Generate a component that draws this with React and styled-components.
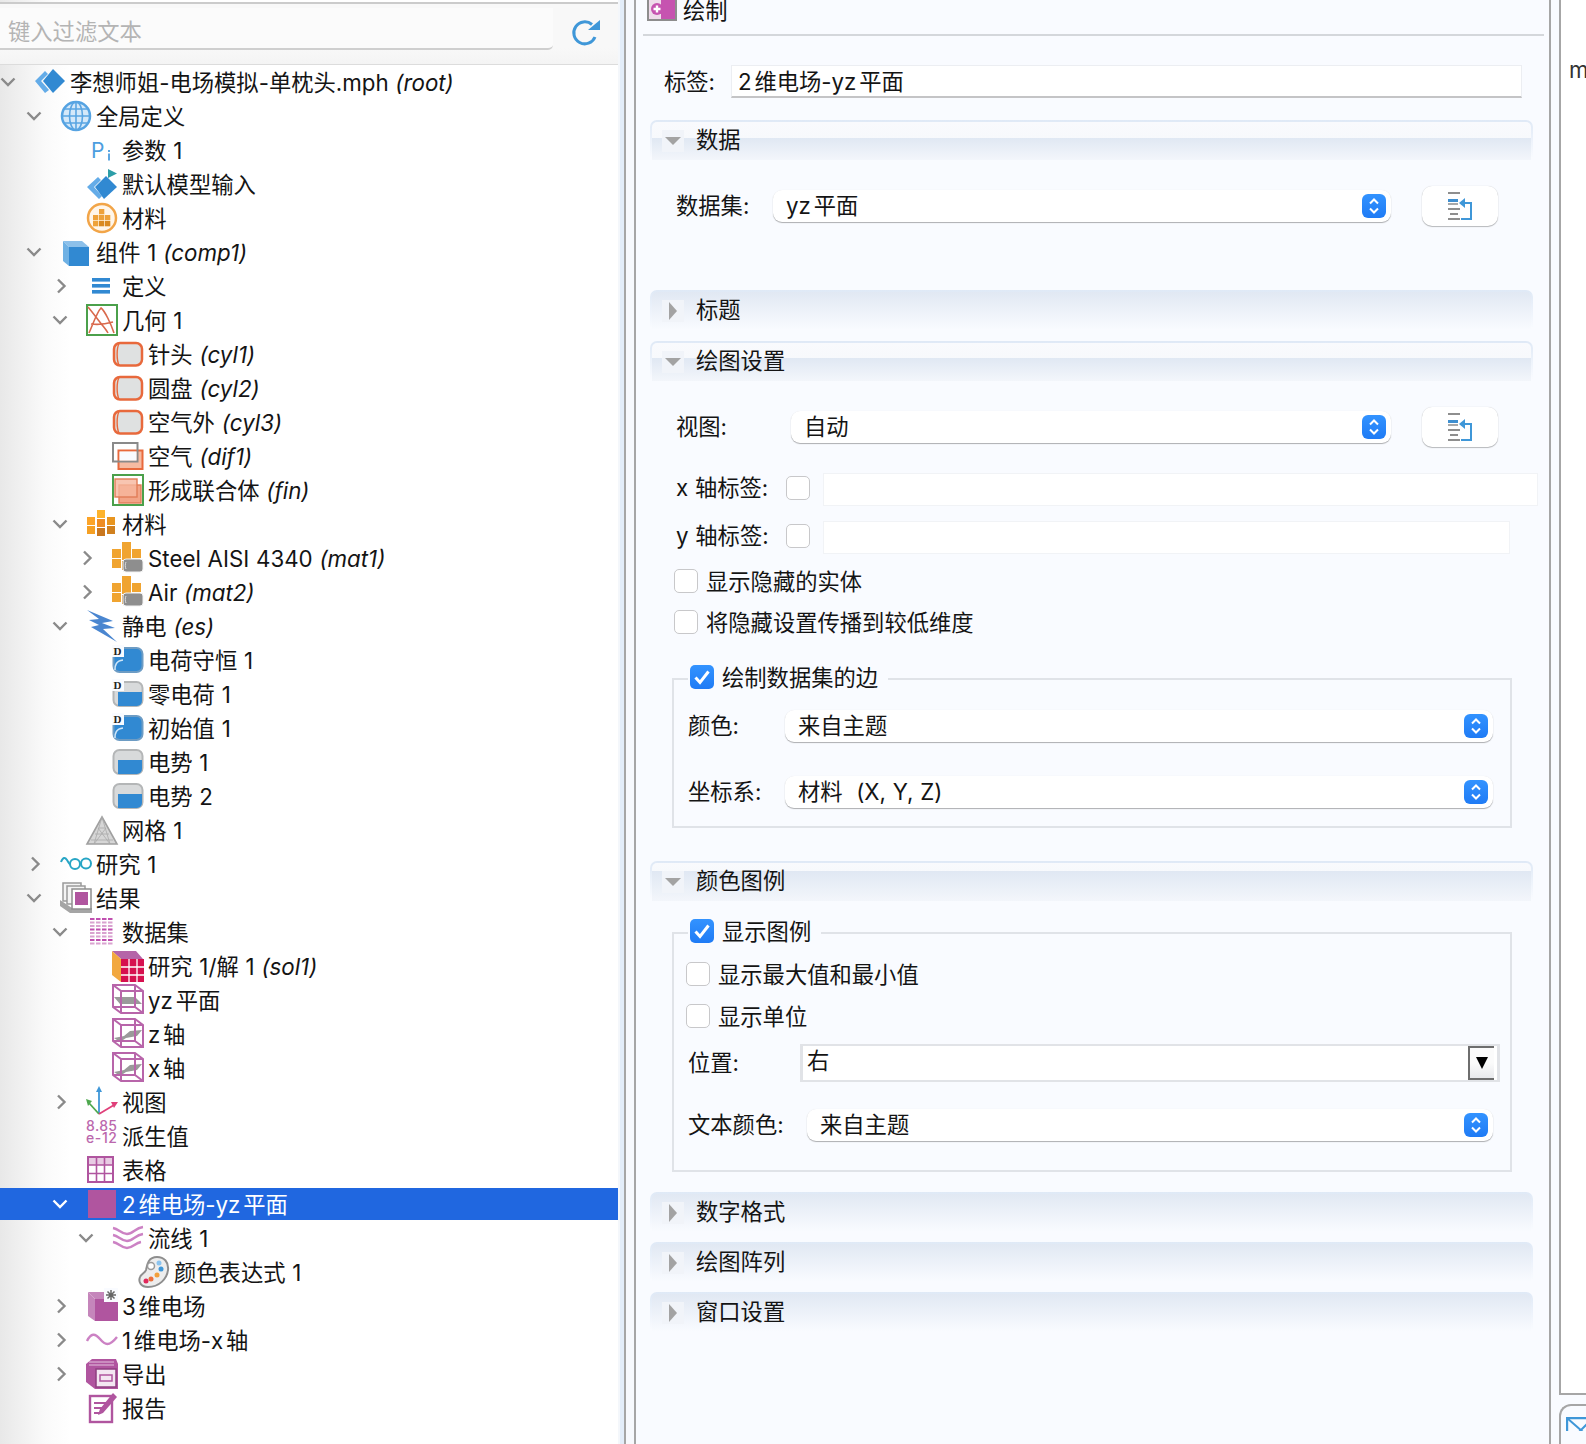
import React from 'react'
import styled, { createGlobalStyle } from 'styled-components'

const PURPLE = '#b0559f'
const WIRE = '#b865aa'
const BLUE = '#3189d2'
const ORANGE = '#e8693c'

const GlobalStyle = createGlobalStyle`
  html, body {
    margin: 0;
    padding: 0;
    background: #f9fbff;
  }
  body {
    font-family: Inter, "Noto Sans CJK SC", sans-serif;
    font-size: 22.3px;
    line-height: 30px;
    word-spacing: 0.5px;
    color: #141414;
    text-autospace: normal;
  }
  * { box-sizing: border-box; }
`

/* ---------- tree icons ---------- */

const Ico = ({ children, size = 32 }) => (
  <svg width={size} height={size} viewBox="0 0 32 32" style={{ overflow: 'visible', display: 'block' }}>{children}</svg>
)

const RootIcon = () => (
  <Ico>
    <polygon points="1,15 11,5 14,8 7,15 15,24 11,27" fill="#64ace8" />
    <polygon points="19,3 31,15 19,27 9,15" fill={BLUE} />
  </Ico>
)

const GlobeIcon = () => (
  <Ico>
    <circle cx="16" cy="16" r="14" fill="#d4e8f9" stroke="#55a3e2" strokeWidth="2.5" />
    <ellipse cx="16" cy="16" rx="6.5" ry="14" fill="none" stroke="#5aa5e2" strokeWidth="1.6" />
    <path d="M16 2v28M2 16h28M4 9h24M4 23h24" stroke="#5aa5e2" strokeWidth="1.6" fill="none" />
  </Ico>
)

const ParamIcon = () => (
  <Ico>
    <text x="5" y="24" fontSize="21" fontFamily="Inter" fill="#4c9edf">P</text>
    <path d="M23 16v2M23 19.500v7" stroke="#4c9edf" strokeWidth="1.800" />
  </Ico>
)

const DefaultIcon = () => (
  <Ico>
    <polygon points="1,19 12,9 15,12 8,19 16,28 13,31" fill="#64ace8" />
    <polygon points="20,8 31,19 18,31 9,19" fill={BLUE} />
    <polygon points="22,1 31,5.500 22,10" fill="#2d9ea8" />
  </Ico>
)

const Squares = ({ small }) => {
  const s = small ? 9 : 8
  const cells = small
    ? [[10, 0, '#f0a430'], [0, 7, '#f0a430'], [10, 9, '#f0a430'], [20, 7, '#f0a430'], [0, 17, '#f0a430'], [10, 19, '#d89030']]
    : [[11, 2, '#fdb32c'], [1, 9, '#fca428'], [11, 11, '#ee8c22'], [21, 9, '#e8951f'], [1, 18, '#f5a024'], [11, 20, '#c9771f'], [21, 18, '#d0801f']]
  return cells.map(([x, y, c], i) => <rect key={i} x={x} y={y} width={s} height={s} fill={c} />)
}

const MaterialRingIcon = () => (
  <Ico>
    <circle cx="16" cy="16" r="14" fill="#fff6ea" stroke="#f2a548" strokeWidth="2.5" />
    {[[13, 7], [7, 13], [13, 13], [19, 13], [7, 19], [13, 19], [19, 19]].map(([x, y], i) => (
      <rect key={i} x={x} y={y} width="5.300" height="5.300" fill={i > 4 ? '#d98a22' : '#eea23a'} />
    ))}
  </Ico>
)

const CubeIcon = () => (
  <Ico>
    <polygon points="3,5 22,5 29,11 9,11" fill="#8cc0ea" />
    <polygon points="3,5 9,11 9,30 3,25" fill="#6fb1e4" />
    <rect x="9" y="11" width="20" height="19" fill={BLUE} />
  </Ico>
)

const LinesIcon = () => (
  <Ico>
    <rect x="6" y="8" width="18" height="3.600" fill={BLUE} />
    <rect x="6" y="14" width="18" height="3.600" fill={BLUE} />
    <rect x="6" y="20" width="18" height="3.600" fill={BLUE} />
  </Ico>
)

const GeometryIcon = () => (
  <Ico>
    <rect x="1" y="1" width="30" height="30" fill="#fff" stroke="#4ba04b" strokeWidth="2" />
    <path d="M3 29C7 20 11 8 15 4c4 3 10 16 13 25M2 3c5 6 11 14 15 19s4 5 5 7M5 20c7 1 15 0 22-2" fill="none" stroke="#d9694c" strokeWidth="1.600" />
  </Ico>
)

const CylinderIcon = () => (
  <Ico>
    <rect x="2" y="5" width="28" height="22.500" rx="6" fill="#dfe1e1" stroke={ORANGE} strokeWidth="2.500" />
    <path d="M7 5.500c-2.500 5-2.500 16.500 0 21.500" fill="none" stroke={ORANGE} strokeWidth="1.400" />
  </Ico>
)

const DifferenceIcon = () => (
  <Ico>
    <rect x="6.500" y="10.500" width="24" height="18.500" fill="#f6bba2" stroke={ORANGE} strokeWidth="2" />
    <rect x="1" y="3" width="24.500" height="18.500" fill="none" stroke="#8a8a8a" strokeWidth="2" />
    <rect x="7.500" y="11.500" width="17" height="9" fill="#f9fbff" />
  </Ico>
)

const UnionIcon = () => (
  <Ico>
    <rect x="1" y="1" width="30" height="30" fill="#fff" stroke="#4ba04b" strokeWidth="2" />
    <rect x="7" y="11" width="22" height="18" fill="#f2a487" stroke="#e27d57" strokeWidth="1.400" />
    <rect x="3" y="5" width="22" height="18" fill="#f6b69d" fillOpacity="0.8" stroke="#e27d57" strokeWidth="1.400" />
  </Ico>
)

const MaterialIcon = () => <Ico><Squares /></Ico>

const MaterialSteelIcon = () => (
  <Ico>
    <Squares small />
    <rect x="11" y="17" width="20" height="13" rx="3" fill="#8e8e8e" stroke="#f2f2f2" />
    <path d="M14 20c-1 2-1 5 0 7" stroke="#ddd" fill="none" />
  </Ico>
)

const BoltIcon = () => (
  <Ico>
    <polygon points="1,0 27,11 16,13 29,18 17,19 31,32 5,17 13,15 3,10 13,9" fill="#4a86d0" />
  </Ico>
)

const DomainIcon = ({ flag, full }) => (
  <Ico>
    <rect x="1.500" y="4" width="29" height="24" rx="6" fill={full ? BLUE : '#d8dadb'} stroke={full ? '#6d9cc4' : '#b4b6b7'} strokeWidth="2" />
    {full ? (
      <path d="M3 26c0-5 1-9 8-10" stroke="#cfe6f8" strokeWidth="1.500" fill="none" />
    ) : (
      <path d="M6 14h24v9a5 5 0 0 1-5 5H6z" fill={BLUE} />
    )}
    {flag && (
      <>
        <rect x="0" y="1" width="12" height="12" fill="#f9fbff" />
        <text x="1.500" y="11" fontSize="11" fontWeight="700" fontFamily="Liberation Serif" fill="#222">D</text>
      </>
    )}
  </Ico>
)

const MeshIcon = () => (
  <Ico>
    <polygon points="16,3 31,30 1,30" fill="#d6d6d6" stroke="#a0a0a0" strokeWidth="1.600" />
    <path d="M9 20h14M5 26h22M12.500 14h7M16 3L8 30M16 3l8 27M8 30l12-16M24 30L12 14" stroke="#aaa" strokeWidth="0.800" fill="none" />
  </Ico>
)

const StudyIcon = () => (
  <Ico>
    <path d="M1 14c2-5 4-5 6-2s2 4 3 4" fill="none" stroke="#27a5c5" strokeWidth="2" />
    <circle cx="15" cy="16" r="5" fill="none" stroke="#27a5c5" strokeWidth="2" />
    <circle cx="26" cy="15.500" r="5" fill="none" stroke="#27a5c5" strokeWidth="2" />
  </Ico>
)

const ResultsIcon = () => (
  <Ico>
    <rect x="3" y="1" width="18" height="18" fill="#f4f4f4" stroke="#9a9a9a" strokeWidth="1.500" />
    <rect x="7" y="4" width="18" height="18" fill="#f4f4f4" stroke="#9a9a9a" strokeWidth="1.500" />
    <polygon points="0,18 12,26 32,26 32,31 10,31 0,24" fill="#a5a5a5" />
    <rect x="12" y="7" width="19" height="20" fill="#fff" stroke="#8e8e8e" strokeWidth="1.500" />
    <rect x="15" y="10" width="13" height="13" fill={PURPLE} />
  </Ico>
)

const DatasetIcon = () => (
  <Ico>
    {[3, 6.500, 10, 13.500, 17, 20.500, 24, 27.500].map((y, row) =>
      [4, 10, 16, 22].map((x) => (
        <rect key={`${x}-${y}`} x={x} y={y - 1} width="4.500" height="2" fill={row % 3 === 0 ? '#c050b0' : '#d9a3d0'} />
      ))
    )}
  </Ico>
)

const SolutionIcon = () => (
  <Ico>
    <polygon points="0,1 24,1 31,9 9,9" fill="#b565a8" />
    <polygon points="0,1 9,9 9,32 0,25" fill="#f2a840" />
    <rect x="9" y="9" width="23" height="23" fill="#d6104f" />
    <path d="M17 9v23M25 9v23M9 17h23M9 25h23" stroke="#fff" strokeWidth="1.300" />
  </Ico>
)

const CutIcon = ({ flat }) => (
  <Ico>
    <polygon points={flat ? '2,13 23,13 30,20 8,20' : '2,20 12,18 18,13 30,12 25,18 14,20 8,24'} fill="#9a9a9a" />
    <path d="M1 1h22l8 6v22H9l-8-6zM1 1l8 6v22M9 7h22M23 1v22H1M23 23l8 6" fill="none" stroke={WIRE} strokeWidth="2" />
  </Ico>
)

const AxesIcon = () => (
  <Ico>
    <path d="M13 28V4" stroke="#3f97d8" strokeWidth="1.800" />
    <polygon points="13,0 16,6 10,6" fill="#3f97d8" />
    <path d="M13 28L3 17" stroke="#4ea84e" strokeWidth="1.800" />
    <polygon points="0,13 6,15 2,20" fill="#4ea84e" />
    <path d="M13 28l15-9" stroke="#e0407a" strokeWidth="1.800" />
    <polygon points="32,16 28,22 25,16" fill="#e0407a" />
  </Ico>
)

const NumericIcon = () => (
  <Ico>
    <text x="0" y="10.500" fontSize="14" fontWeight="500" fontFamily="Inter" fill="#bb67ad" textLength="31">8.85</text>
    <text x="0" y="23" fontSize="14" fontWeight="500" fontFamily="Inter" fill="#bb67ad" textLength="31">e-12</text>
  </Ico>
)

const TableIcon = () => (
  <Ico>
    <rect x="2" y="3" width="25" height="25" fill="#fff" stroke={PURPLE} strokeWidth="2" />
    <rect x="3" y="4" width="23" height="7" fill="#d8a8d0" opacity="0.6" />
    <path d="M10.500 3v25M18.500 3v25M2 11h25M2 19.500h25" stroke={PURPLE} strokeWidth="1.600" />
  </Ico>
)

const SquareIcon = () => (
  <Ico>
    <rect x="2" y="2" width="28" height="28" fill={PURPLE} />
  </Ico>
)

const StreamIcon = () => (
  <Ico>
    <path d="M1 6c6 1 8 6 14 6s8-6 16-7M1 13c6 1 8 6 14 6s8-6 16-7M1 20c6 1 8 6 14 6s8-5 14-6" fill="none" stroke="#cc82c4" strokeWidth="2.400" />
  </Ico>
)

const PaletteIcon = () => (
  <Ico>
    <path d="M19 1c7 0 12 5 11 13-1 9-9 17-20 17C3 31 0 26 2 21c1-3 5-4 6-7 1-5 2-13 11-13z" fill="#ededed" stroke="#8e8e8e" strokeWidth="2" />
    <circle cx="13" cy="10" r="3.500" fill="#fff" stroke="#9a9a9a" strokeWidth="1.500" />
    <circle cx="21" cy="7" r="2.500" fill="#8cc4ef" />
    <circle cx="23" cy="13" r="2.500" fill="#3f97d8" />
    <circle cx="19" cy="19" r="2.500" fill="#f2a03c" />
    <circle cx="13" cy="23" r="2.500" fill="#ec6f3c" />
    <circle cx="8" cy="25" r="2.500" fill="#e0285c" />
  </Ico>
)

const Plot3dIcon = () => (
  <Ico>
    <polygon points="2,2 22,2 30,9 9,9" fill="#c586bb" />
    <polygon points="2,2 9,9 9,31 2,26" fill="#c586bb" />
    <rect x="9" y="9" width="23" height="22" fill={PURPLE} />
    <rect x="18" y="-2" width="14" height="14" fill="#f9fbff" />
    <path d="M25 0v10M20 5h10M21.500 1.500l7 7M28.500 1.500l-7 7" stroke="#666" strokeWidth="1.500" />
  </Ico>
)

const WaveIcon = () => (
  <Ico>
    <path d="M1 17c4-8 8-8 13-2s9 8 17-2" fill="none" stroke="#cc82c4" strokeWidth="2.400" />
  </Ico>
)

const ExportIcon = () => (
  <Ico>
    <polygon points="0,6 6,1 30,1 32,6 32,31 9,31 0,24" fill={PURPLE} />
    <path d="M3 4h25M3 7h25" stroke="#e4c3df" strokeWidth="1" />
    <rect x="10" y="11" width="20" height="18" fill="#f4e6f2" stroke="#8f3f81" strokeWidth="1.500" />
    <rect x="14" y="17" width="12" height="6" fill="none" stroke={PURPLE} strokeWidth="1.500" />
  </Ico>
)

const ReportIcon = () => (
  <Ico>
    <rect x="4" y="4" width="22" height="26" fill="#fff" stroke={PURPLE} strokeWidth="2.400" />
    <path d="M8 11h12M8 16h8M8 21h5" stroke={PURPLE} strokeWidth="2" />
    <polygon points="27,1 31,5 17,21 12,23 14,17" fill={PURPLE} />
  </Ico>
)

/* ---------- tree data ---------- */

const treeItems = [
  { level: 0, open: true, icon: <RootIcon />, label: '李想师姐-电场模拟-单枕头.mph', note: '(root)' },
  { level: 1, open: true, icon: <GlobeIcon />, label: '全局定义' },
  { level: 2, icon: <ParamIcon />, label: '参数 1' },
  { level: 2, icon: <DefaultIcon />, label: '默认模型输入' },
  { level: 2, icon: <MaterialRingIcon />, label: '材料' },
  { level: 1, open: true, icon: <CubeIcon />, label: '组件 1', note: '(comp1)' },
  { level: 2, open: false, icon: <LinesIcon />, label: '定义' },
  { level: 2, open: true, icon: <GeometryIcon />, label: '几何 1' },
  { level: 3, icon: <CylinderIcon />, label: '针头', note: '(cyl1)' },
  { level: 3, icon: <CylinderIcon />, label: '圆盘', note: '(cyl2)' },
  { level: 3, icon: <CylinderIcon />, label: '空气外', note: '(cyl3)' },
  { level: 3, icon: <DifferenceIcon />, label: '空气', note: '(dif1)' },
  { level: 3, icon: <UnionIcon />, label: '形成联合体', note: '(fin)' },
  { level: 2, open: true, icon: <MaterialIcon />, label: '材料' },
  { level: 3, open: false, icon: <MaterialSteelIcon />, label: 'Steel AISI 4340', note: '(mat1)' },
  { level: 3, open: false, icon: <MaterialSteelIcon />, label: 'Air', note: '(mat2)' },
  { level: 2, open: true, icon: <BoltIcon />, label: '静电', note: '(es)' },
  { level: 3, icon: <DomainIcon flag full />, label: '电荷守恒 1' },
  { level: 3, icon: <DomainIcon flag />, label: '零电荷 1' },
  { level: 3, icon: <DomainIcon flag full />, label: '初始值 1' },
  { level: 3, icon: <DomainIcon />, label: '电势 1' },
  { level: 3, icon: <DomainIcon />, label: '电势 2' },
  { level: 2, icon: <MeshIcon />, label: '网格 1' },
  { level: 1, open: false, icon: <StudyIcon />, label: '研究 1' },
  { level: 1, open: true, icon: <ResultsIcon />, label: '结果' },
  { level: 2, open: true, icon: <DatasetIcon />, label: '数据集' },
  { level: 3, icon: <SolutionIcon />, label: '研究 1/解 1', note: '(sol1)' },
  { level: 3, icon: <CutIcon flat />, label: 'yz平面' },
  { level: 3, icon: <CutIcon />, label: 'z轴' },
  { level: 3, icon: <CutIcon />, label: 'x轴' },
  { level: 2, open: false, icon: <AxesIcon />, label: '视图' },
  { level: 2, icon: <NumericIcon />, label: '派生值' },
  { level: 2, icon: <TableIcon />, label: '表格' },
  { level: 2, open: true, selected: true, icon: <SquareIcon />, label: '2维电场-yz平面' },
  { level: 3, open: true, icon: <StreamIcon />, label: '流线 1' },
  { level: 4, icon: <PaletteIcon />, label: '颜色表达式 1' },
  { level: 2, open: false, icon: <Plot3dIcon />, label: '3维电场' },
  { level: 2, open: false, icon: <WaveIcon />, label: '1维电场-x轴' },
  { level: 2, open: false, icon: <ExportIcon />, label: '导出' },
  { level: 2, icon: <ReportIcon />, label: '报告' },
]

/* ---------- small shared parts ---------- */

const Chevron = ({ open }) => (
  <svg width="18" height="18" viewBox="0 0 18 18" style={{ display: 'block' }}>
    <path
      d={open ? 'M2.500 5.500L9 12l6.500-6.500' : 'M7 2.500L13.500 9 7 15.500'}
      fill="none"
      stroke="currentColor"
      strokeWidth="2.400"
    />
  </svg>
)

const Stepper = () => (
  <StepperBox>
    <svg width="14" height="20" viewBox="0 0 14 20">
      <path d="M3 7.500L7 3.500l4 4M3 12.500l4 4 4-4" fill="none" stroke="#fff" strokeWidth="2" />
    </svg>
  </StepperBox>
)

const Select = ({ children, width }) => (
  <SelectBox $width={width}>
    <span>{children}</span>
    <Stepper />
  </SelectBox>
)

const ResetButton = () => (
  <IconButton>
    <svg width="28" height="30" viewBox="0 0 28 30">
      <path d="M2 2h12M2 18h12M4 23h8M2 28h12" stroke="#8e8e8e" strokeWidth="2" />
      <path d="M2 9.500h10" stroke="#3f8fd0" strokeWidth="3" />
      <path d="M2 13h10" stroke="#a9a9a9" strokeWidth="2" />
      <path d="M16 12h9v16h-10" fill="none" stroke="#3f97d8" strokeWidth="2" />
      <polygon points="13,12 19,7 19,17" fill="#3f97d8" />
    </svg>
  </IconButton>
)

const Check = ({ checked, children }) => (
  <CheckLabel>
    <CheckBox $checked={checked}>
      {checked && (
        <svg width="20" height="20" viewBox="0 0 20 20">
          <path d="M3.500 10.500l4.500 5L16.500 4.500" fill="none" stroke="#fff" strokeWidth="3" />
        </svg>
      )}
    </CheckBox>
    {children && <CheckText>{children}</CheckText>}
  </CheckLabel>
)

const SectionHead = ({ open, band, title, gap }) => (
  <HeadFrame $gap={gap}>
    <HeadInner $open={open} $band={band}>
      <Toggle>
        {open ? <TriDown /> : <TriRight />}
      </Toggle>
      <HeadTitle>{title}</HeadTitle>
    </HeadInner>
  </HeadFrame>
)

/* ---------- page ---------- */

const App = () => (
  <>
    <GlobalStyle />
    <Page>
      <TreePanel>
        <FilterBar>
          <FilterField>键入过滤文本</FilterField>
          <RefreshSlot>
            <svg width="32" height="32" viewBox="0 0 32 32">
              <path d="M21 8.500A11 11 0 1 0 24 21" fill="none" stroke="#3f97d8" strokeWidth="3" />
              <polygon points="17,14 29,14 29,4" fill="#3f97d8" />
            </svg>
          </RefreshSlot>
        </FilterBar>
        {treeItems.map((item, i) => (
          <TreeRow key={i} $level={item.level} $selected={item.selected}>
            <ChevronSlot $selected={item.selected}>
              {item.open !== undefined && <Chevron open={item.open} />}
            </ChevronSlot>
            <IconSlot>{item.icon}</IconSlot>
            <TreeLabel>
              {item.label}
              {item.note && <Note> {item.note}</Note>}
            </TreeLabel>
          </TreeRow>
        ))}
      </TreePanel>

      <Splitter />

      <SettingsPanel>
        <TitleBar>
          <PlotBadge>
            <svg width="30" height="22" viewBox="0 0 30 22">
              <rect x="1" y="-1" width="28" height="22" fill="#c653b0" stroke="#8d8d8d" strokeWidth="2" />
              <rect x="2" y="0" width="12" height="20" fill="#eedcea" />
              <circle cx="10" cy="10" r="6" fill="#c653b0" />
              <path d="M10 6.500v7M6.500 10h7" stroke="#fff" strokeWidth="2.400" />
            </svg>
          </PlotBadge>
          绘制
        </TitleBar>

        <LabelRow>
          <span>标签:</span>
          <TextField $width={791}>2维电场-yz平面</TextField>
        </LabelRow>

        <SectionHead open band={18} title="数据" gap={22} />
        <FormRow $top={26} $labelWidth={97}>
          <span>数据集:</span>
          <Select width={618}>yz平面</Select>
          <ResetButton />
        </FormRow>

        <SectionHead title="标题" gap={64} />

        <SectionHead open band={17} title="绘图设置" gap={11} />
        <FormRow $top={26} $labelWidth={115}>
          <span>视图:</span>
          <Select width={600}>自动</Select>
          <ResetButton />
        </FormRow>
        <AxisRow $top={26}>
          <span>x 轴标签:</span>
          <Check />
          <AxisField $width={715} />
        </AxisRow>
        <AxisRow $top={15}>
          <span>y 轴标签:</span>
          <Check />
          <AxisField $width={687} />
        </AxisRow>
        <CheckRow $top={15}><Check>显示隐藏的实体</Check></CheckRow>
        <CheckRow $top={17}><Check>将隐藏设置传播到较低维度</Check></CheckRow>

        <Group $top={33}>
          <GroupLegend><Check checked>绘制数据集的边</Check></GroupLegend>
          <GroupRow $top={19} $labelWidth={97}>
            <span>颜色:</span>
            <Select width={708}>来自主题</Select>
          </GroupRow>
          <GroupRow $top={34} $labelWidth={97}>
            <span>坐标系:</span>
            <Select width={708}>材料 &nbsp;(X, Y, Z)</Select>
          </GroupRow>
          <GroupEnd $height={18} />
        </Group>

        <SectionHead open band={10} title="颜色图例" gap={33} />

        <Group $top={20}>
          <GroupLegend><Check checked>显示图例</Check></GroupLegend>
          <GroupCheck $top={17}><Check>显示最大值和最小值</Check></GroupCheck>
          <GroupCheck $top={18}><Check>显示单位</Check></GroupCheck>
          <GroupRow $top={16} $labelWidth={112}>
            <span>位置:</span>
            <Combo>
              <ComboText>右</ComboText>
              <ComboButton />
            </Combo>
          </GroupRow>
          <GroupRow $top={27} $labelWidth={119}>
            <span>文本颜色:</span>
            <Select width={686}>来自主题</Select>
          </GroupRow>
          <GroupEnd $height={29} />
        </Group>

        <SectionHead title="数字格式" gap={20} />
        <SectionHead title="绘图阵列" gap={10} />
        <SectionHead title="窗口设置" gap={10} />
      </SettingsPanel>

      <SideRail>
        <SidePane>m</SidePane>
        <SideTab>
          <svg width="22" height="14" viewBox="0 0 22 14" style={{ display: 'block' }}>
            <path d="M1 14V1h30" fill="none" stroke="#3f97d8" strokeWidth="2.400" />
            <path d="M1 1l16 14M22 6l-9 9" stroke="#3f97d8" strokeWidth="2" fill="none" />
          </svg>
        </SideTab>
      </SideRail>
    </Page>
  </>
)

/* ---------- styles ---------- */

const Page = styled.div`
  display: flex;
  width: 1586px;
  height: 1444px;
  overflow: hidden;
  background: #f9fbff;
`

const TreePanel = styled.div`
  flex: 0 0 620px;
  border-right: 2px solid #f4f7fb;
  background: linear-gradient(90deg, #e8e8e8 0, #fafafa 45px, #fff 70px);
`

const FilterBar = styled.div`
  height: 63px;
  margin-top: 2px;
  padding-top: 4px;
  display: flex;
  background: linear-gradient(#f8f8f8, #f8f8f8 44px, #f4f4f4);
  border-top: 2px solid #cbcbcb;
  border-bottom: 1px solid #dcdcdc;
`

const FilterField = styled.div`
  width: 553px;
  height: 42px;
  padding: 10px 0 0 8px;
  line-height: 28px;
  color: #b4b4b4;
  border-bottom: 2px solid #cfcfcf;
  border-bottom-right-radius: 5px;
  background: #fbfbfb;
`

const RefreshSlot = styled.div`
  margin: 8px 0 0 18px;
`

const TreeRow = styled.div`
  height: 34px;
  display: flex;
  align-items: center;
  padding-left: ${(p) => p.$level * 26}px;
  color: ${(p) => (p.$selected ? '#fff' : '#141414')};
  background-image: ${(p) =>
    p.$selected ? 'linear-gradient(transparent 1px, #2067e0 1px, #2067e0 33px, transparent 33px)' : 'none'};
`

const ChevronSlot = styled.div`
  flex: 0 0 34px;
  margin-left: -1px;
  margin-right: 1px;
  color: ${(p) => (p.$selected ? '#fff' : '#8a8a8a')};
`

const IconSlot = styled.div`
  flex: 0 0 32px;
  height: 32px;
  margin-right: 4px;
`

const TreeLabel = styled.div`
  white-space: pre;
  line-height: 34px;
  margin-top: 2px;
`

const Note = styled.span`
  font-style: italic;
`

const Splitter = styled.div`
  flex: 0 0 16px;
  background: linear-gradient(
    90deg,
    #e3edf9 0,
    #e3edf9 4px,
    #a6a6a6 4px,
    #a6a6a6 6px,
    #f7f9fd 6px,
    #f7f9fd 14px,
    #a6a6a6 14px
  );
`

const SettingsPanel = styled.div`
  flex: 0 0 913px;
  background: #f9fbff;
`

const TitleBar = styled.div`
  height: 36px;
  margin: 0 5px 0 7px;
  padding: 0 0 12px 4px;
  display: flex;
  align-items: center;
  border-bottom: 2px solid #d4d7db;
`

const PlotBadge = styled.div`
  display: flex;
  margin: 0 6px 2px 0;
`

const LabelRow = styled.div`
  margin-top: 29px;
  padding-left: 28px;
  display: flex;
  align-items: center;
  & > span:first-child {
    width: 67px;
  }
`

const TextField = styled.div`
  width: ${(p) => p.$width}px;
  height: 33px;
  padding-left: 6px;
  line-height: 31px;
  background: #fff;
  border: 1px solid #eceef2;
  border-bottom: 2px solid #c4c4c6;
`

const HeadFrame = styled.div`
  margin: ${(p) => p.$gap}px 16px 0 14px;
  height: 40px;
  padding: 2px 2px 0;
  border-radius: 7px 7px 0 0;
  background: linear-gradient(#dfe9f6, #f9fbff 38px);
`

const HeadInner = styled.div`
  height: 38px;
  padding-left: 10px;
  display: flex;
  align-items: center;
  border-radius: 5px 5px 0 0;
  background: ${(p) =>
    p.$open
      ? `linear-gradient(#f9fafd 0, #f7f9fc ${p.$band - 2}px, #e0e8f3 ${p.$band - 2}px, #f3f6fb 38px, #f9fbff 38px)`
      : 'linear-gradient(#e1e8f3 0, #f9fbff 38px)'};
`

const Toggle = styled.div`
  width: 22px;
  height: 22px;
  margin-right: 12px;
  display: flex;
  align-items: center;
  justify-content: center;
  background: #f1f4f9;
`

const HeadTitle = styled.span`
  margin-bottom: 2px;
`

const TriDown = styled.div`
  border-left: 8px solid transparent;
  border-right: 8px solid transparent;
  border-top: 8px solid #a3a3a3;
`

const TriRight = styled.div`
  border-top: 9px solid transparent;
  border-bottom: 9px solid transparent;
  border-left: 8px solid #a3a3a3;
`

const FormRow = styled.div`
  margin-top: ${(p) => p.$top}px;
  padding-left: 40px;
  height: 40px;
  display: flex;
  align-items: center;
  & > span:first-child {
    width: ${(p) => p.$labelWidth}px;
  }
`

const SelectBox = styled.div`
  width: ${(p) => p.$width}px;
  height: 32px;
  padding: 0 5px 0 13px;
  display: flex;
  align-items: center;
  justify-content: space-between;
  white-space: pre;
  background: #fff;
  border-radius: 9px;
  box-shadow: 0 1px 1px rgba(0, 0, 0, 0.3), 0 0 1px rgba(0, 0, 0, 0.08);
`

const StepperBox = styled.div`
  width: 24px;
  height: 24px;
  display: flex;
  align-items: center;
  justify-content: center;
  border-radius: 6px;
  background: linear-gradient(#3393ff, #1f7bf5);
`

const IconButton = styled.div`
  width: 76px;
  height: 40px;
  margin-left: 31px;
  display: flex;
  align-items: center;
  justify-content: center;
  background: #fff;
  border-radius: 10px;
  box-shadow: 0 1px 1px rgba(0, 0, 0, 0.25), 0 0 1px rgba(0, 0, 0, 0.2);
`

const AxisRow = styled.div`
  margin-top: ${(p) => p.$top}px;
  margin-left: 40px;
  height: 33px;
  display: flex;
  align-items: flex-start;
  & > span:first-child {
    width: 110px;
  }
  & > div:nth-child(2) {
    margin-top: 3px;
  }
`

const AxisField = styled.div`
  width: ${(p) => p.$width}px;
  height: 33px;
  margin-left: 13px;
  background: #fff;
  border: 1px solid #f1f3f6;
`

const CheckRow = styled.div`
  margin: ${(p) => p.$top}px 0 0 38px;
  height: 24px;
  display: flex;
`

const CheckLabel = styled.div`
  display: flex;
  align-items: center;
  gap: 8px;
  height: 24px;
`

const CheckText = styled.span`
  margin-top: 2px;
`

const CheckBox = styled.div`
  width: 24px;
  height: 24px;
  display: flex;
  align-items: center;
  justify-content: center;
  border-radius: 5px;
  background: ${(p) => (p.$checked ? 'linear-gradient(#3393ff, #1f7bf5)' : '#fff')};
  border: ${(p) => (p.$checked ? 'none' : '1px solid #c8c8ca')};
`

const Group = styled.fieldset`
  width: 840px;
  margin: ${(p) => p.$top}px 0 0 36px;
  padding: 0;
  border: 2px solid #e0e3e8;
`

const GroupLegend = styled.legend`
  margin-left: 14px;
  padding: 0 10px 0 2px;
  height: 24px;
  display: flex;
  & > div {
    margin-top: -2px;
  }
`

const GroupRow = styled.div`
  margin-top: ${(p) => p.$top}px;
  padding-left: 14px;
  display: flex;
  align-items: center;
  & > span:first-child {
    width: ${(p) => p.$labelWidth}px;
  }
`

const GroupCheck = styled.div`
  margin-top: ${(p) => p.$top}px;
  padding-left: 12px;
  height: 24px;
  display: flex;
`

const GroupEnd = styled.div`
  height: ${(p) => p.$height}px;
`

const Combo = styled.div`
  width: 700px;
  height: 38px;
  padding: 0 3px 0 4px;
  display: flex;
  align-items: center;
  justify-content: space-between;
  background: #fff;
  border-style: solid;
  border-color: #e1e3e7;
  border-width: 2px 3px;
`

const ComboText = styled.span`
  margin-bottom: 4px;
`

const ComboButton = styled.div`
  position: relative;
  width: 26px;
  height: 34px;
  background: linear-gradient(#fbfbfb 50%, #e8e9ec);
  border-left: 2px solid #6e6e6e;
  border-top: 2px solid #6e6e6e;
  border-bottom: 2px solid #6e6e6e;
  &::after {
    content: '';
    position: absolute;
    left: 6px;
    top: 9px;
    border-left: 6px solid transparent;
    border-right: 6px solid transparent;
    border-top: 12px solid #000;
  }
`

const SideRail = styled.div`
  flex: 1;
  display: flex;
  flex-direction: column;
  border-left: 2px solid #a6a6a6;
  padding-left: 8px;
`

const SidePane = styled.div`
  height: 1409px;
  padding: 55px 0 0 8px;
  overflow: hidden;
  color: #333;
  background: #fff;
  border-left: 2px solid #a6a6a6;
  border-bottom: 2px solid #a6a6a6;
`

const SideTab = styled.div`
  margin-top: 9px;
  height: 40px;
  padding: 11px 0 0 5px;
  overflow: hidden;
  border-left: 2px solid #a6a6a6;
  border-top: 2px solid #a6a6a6;
  border-top-left-radius: 12px;
`

export default App
